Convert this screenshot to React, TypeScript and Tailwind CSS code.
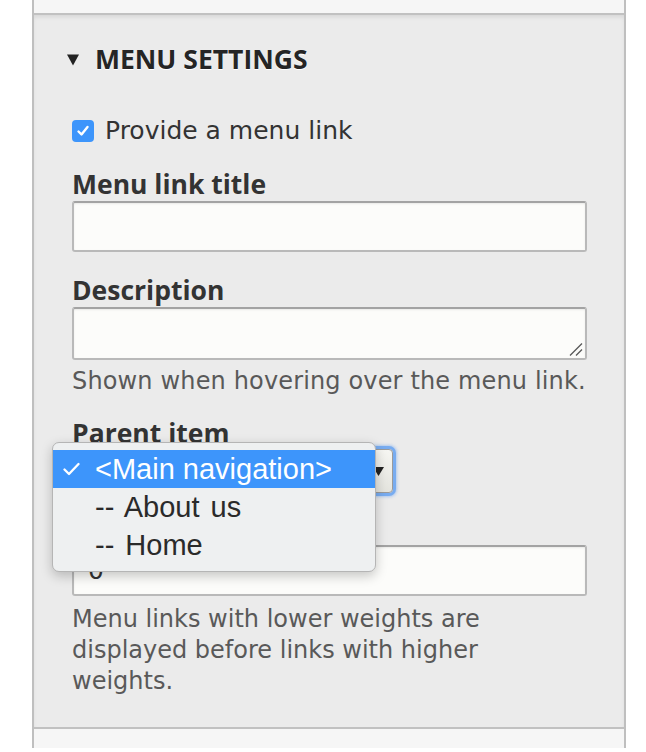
import React from "react";

const body = { fontFamily: '"DejaVu Sans", Verdana, sans-serif' };
const bold = { fontFamily: '"Open Sans", "DejaVu Sans", sans-serif' };
const sys = { fontFamily: '"Liberation Sans", Arial, sans-serif' };

function Label({ children, className = "" }: { children: React.ReactNode; className?: string }) {
  return (
    <div
      className={`text-[26.5px] leading-[30px] font-bold text-[#333333] ${className}`}
      style={bold}
    >
      {children}
    </div>
  );
}

function TextInput({ className = "", children }: { className?: string; children?: React.ReactNode }) {
  return (
    <div
      className={`relative w-full h-[51px] rounded-[3px] border-2 border-[#b9b9b9] border-t-[#a3a3a3] bg-[#fcfcfa] shadow-[inset_0_1px_2px_rgba(0,0,0,0.08)] ${className}`}
    >
      {children}
    </div>
  );
}

export default function App() {
  return (
    <div className="min-h-screen w-full bg-white">
      <div className="ml-[32px] w-[594px] border-x-2 border-[#bfbfbf] flex flex-col">
        <div className="h-[15px] bg-[#f6f6f6] border-b-2 border-[#c1c1c1]" />
        <div className="relative h-[712px] bg-[#ebebeb] pl-[38px] pr-[37px] pt-[28px] shadow-[inset_0_3px_4px_-1px_rgba(0,0,0,0.09)]">
          {/* Summary */}
          <div className="-ml-[5px] flex items-center h-[32px] gap-[16px]">
            <svg width="12" height="12" viewBox="0 0 12 12" className="mt-[1px]">
              <polygon points="0,0.5 12,0.5 6,11.5" fill="#222222" />
            </svg>
            <span
              className="text-[26.5px] leading-[32px] font-bold text-[#252525] [text-shadow:0_1px_0_#ffffff]"
              style={bold}
            >
              MENU SETTINGS
            </span>
          </div>

          {/* Checkbox */}
          <div className="mt-[40px] flex items-center h-[32px] gap-[11px]">
            <div className="w-[22px] h-[22px] rounded-[4px] bg-[#3d95fb] flex items-center justify-center">
              <svg width="14" height="14" viewBox="0 0 14 14">
                <polyline
                  points="2.5,7.5 5.5,10.5 11.5,3"
                  fill="none"
                  stroke="#ffffff"
                  strokeWidth="2.4"
                  strokeLinecap="round"
                  strokeLinejoin="round"
                />
              </svg>
            </div>
            <span className="text-[25px] leading-[32px] text-[#333333]" style={body}>
              Provide a menu link
            </span>
          </div>

          <Label className="mt-[22px]">Menu link title</Label>
          <TextInput className="mt-[2px]" />

          <Label className="mt-[23px]">Description</Label>
          <div className="mt-[2px] relative w-full h-[53px] rounded-[3px] border-2 border-[#b9b9b9] border-t-[#a3a3a3] bg-[#fcfcfa] shadow-[inset_0_1px_2px_rgba(0,0,0,0.08)]">
            <svg
              width="14"
              height="13"
              viewBox="0 0 14 13"
              className="absolute right-[2px] bottom-[2px]"
            >
              <line x1="1" y1="12.5" x2="13" y2="0.5" stroke="#555555" strokeWidth="1.2" />
              <line x1="7" y1="12.5" x2="13" y2="6.5" stroke="#555555" strokeWidth="1.2" />
            </svg>
          </div>
          <div
            className="mt-[6px] text-[24px] leading-[30px] text-[#595959] whitespace-nowrap tracking-[0.15px]"
            style={body}
          >
            Shown when hovering over the menu link.
          </div>

          <Label className="mt-[22px]">Parent item</Label>
          <div className="mt-[1px] w-[321px] h-[44px] rounded-[4px] border border-[#9a9a9a] bg-gradient-to-b from-[#f6f6f2] to-[#e4e4de] shadow-[0_0_0_3px_#78acf0,0_0_3px_4px_rgba(120,170,240,0.55)] flex items-center justify-between pl-[14px] pr-[8px]">
            <span className="text-[24px] text-[#333333]" style={body}>
              &lt;Main navigation&gt;
            </span>
            <svg width="11" height="9" viewBox="0 0 11 9">
              <polygon points="0,0 11,0 5.5,9" fill="#222222" />
            </svg>
          </div>

          <Label className="mt-[20px]">Weight</Label>
          <TextInput className="mt-[2px]">
            <div
              className="absolute left-[14px] top-0 h-full flex items-center text-[25px] text-[#333333]"
              style={body}
            >
              0
            </div>
          </TextInput>
          <div className="mt-[8px] max-w-[490px] text-[24px] leading-[31px] text-[#595959]" style={body}>
            Menu links with lower weights are displayed before links with higher weights.
          </div>

          {/* Native dropdown popup */}
          <div className="absolute left-[18px] top-[427px] w-[324px] h-[130px] rounded-[7px] border border-[#b5b5b5] bg-[#eef0f1] shadow-[0_4px_12px_rgba(0,0,0,0.22)] py-[7px] overflow-hidden">
            <div className="h-[38px] bg-[#3d95fb] flex items-center text-white">
              <div className="w-[42px] flex justify-end pr-[15px]">
                <svg width="17" height="14" viewBox="0 0 17 14">
                  <polyline
                    points="1.5,7.5 6,12 15.5,2"
                    fill="none"
                    stroke="#ffffff"
                    strokeWidth="2.3"
                    strokeLinecap="round"
                    strokeLinejoin="round"
                  />
                </svg>
              </div>
              <span className="text-[29px] leading-[38px]" style={sys}>
                &lt;Main navigation&gt;
              </span>
            </div>
            <div
              className="h-[38px] flex items-center pl-[42px] text-[29px] leading-[38px] text-[#2a2a2a] [word-spacing:3px]"
              style={sys}
            >
              -- About us
            </div>
            <div
              className="h-[38px] flex items-center pl-[42px] text-[29px] leading-[38px] text-[#2a2a2a] [word-spacing:3px]"
              style={sys}
            >
              -- Home
            </div>
          </div>
        </div>
        <div className="h-[21px] bg-[#f6f6f6] border-t-2 border-[#c1c1c1]" />
      </div>
    </div>
  );
}
